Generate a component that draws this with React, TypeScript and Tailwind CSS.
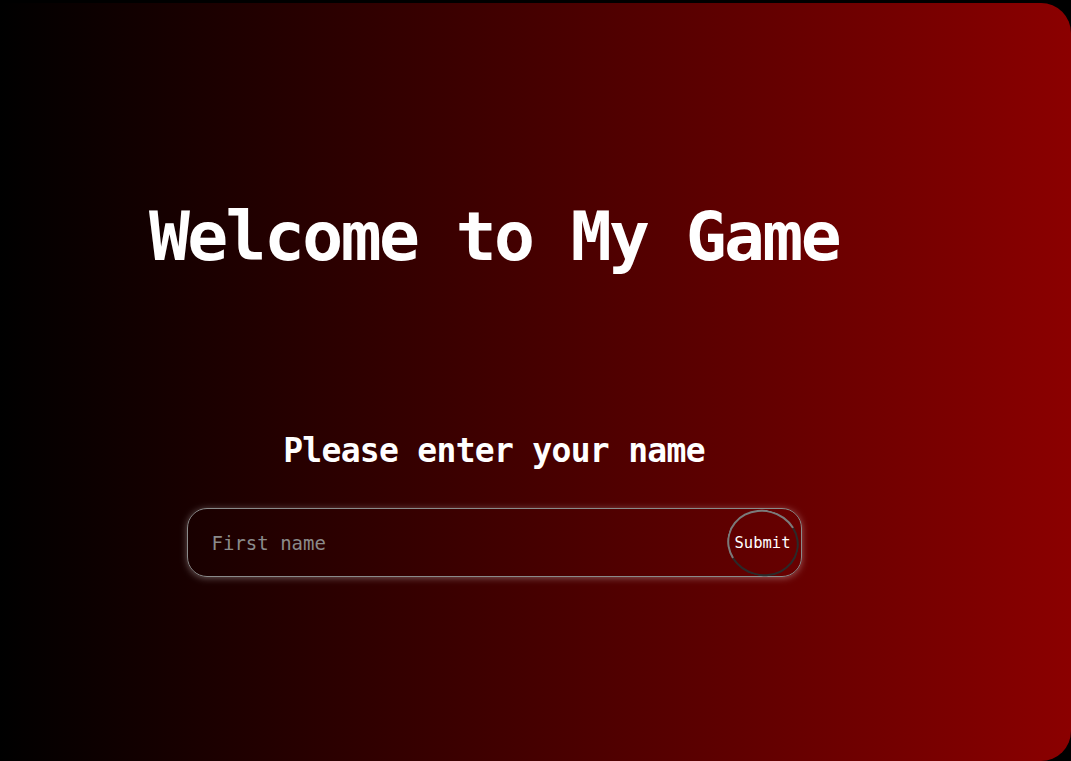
import React from "react";

export default function App() {
  const mono = { fontFamily: '"DejaVu Sans Mono", "Liberation Mono", monospace' };
  return (
    <div className="min-h-screen w-full bg-black pt-[3px] overflow-hidden" style={mono}>
      <div className="h-[758px] w-full rounded-r-[30px] bg-[linear-gradient(to_right,#000000,#8b0000)]">
        <div className="w-[988px] flex flex-col items-center pt-[200px]">
          <h1 className="text-[68px] leading-none font-bold text-white tracking-[-2.6px] whitespace-nowrap">
            Welcome to My Game
          </h1>
          <h2 className="mt-[163px] text-[33px] leading-none font-bold text-white tracking-[-0.7px] whitespace-nowrap">
            Please enter your name
          </h2>
          <form
            className="mt-[41px] w-[615px] h-[69px] rounded-[20px] border border-[#8a8a8a] shadow-[0_1px_7px_rgba(255,255,255,0.35)] flex items-center pr-[2px]"
            onSubmit={(e) => e.preventDefault()}
          >
            <input
              type="text"
              placeholder="First name"
              className="flex-1 min-w-0 h-full bg-transparent outline-none pl-6 text-[19px] text-white placeholder:text-[#8a8a8a]"
              style={mono}
            />
            <button
              type="submit"
              className="relative w-[72px] h-[66px] rounded-[50%] text-white text-[15.5px] flex items-center justify-center shrink-0 pt-[3px]"
              style={mono}
            >
              <span className="absolute inset-0 rounded-[50%] border-2 border-t-[#7a7a7a] border-l-[#7a7a7a] border-r-[#2a2a2a] border-b-[#2a2a2a] rotate-[15deg]" />
              <span className="relative">Submit</span>
            </button>
          </form>
        </div>
      </div>
    </div>
  );
}
